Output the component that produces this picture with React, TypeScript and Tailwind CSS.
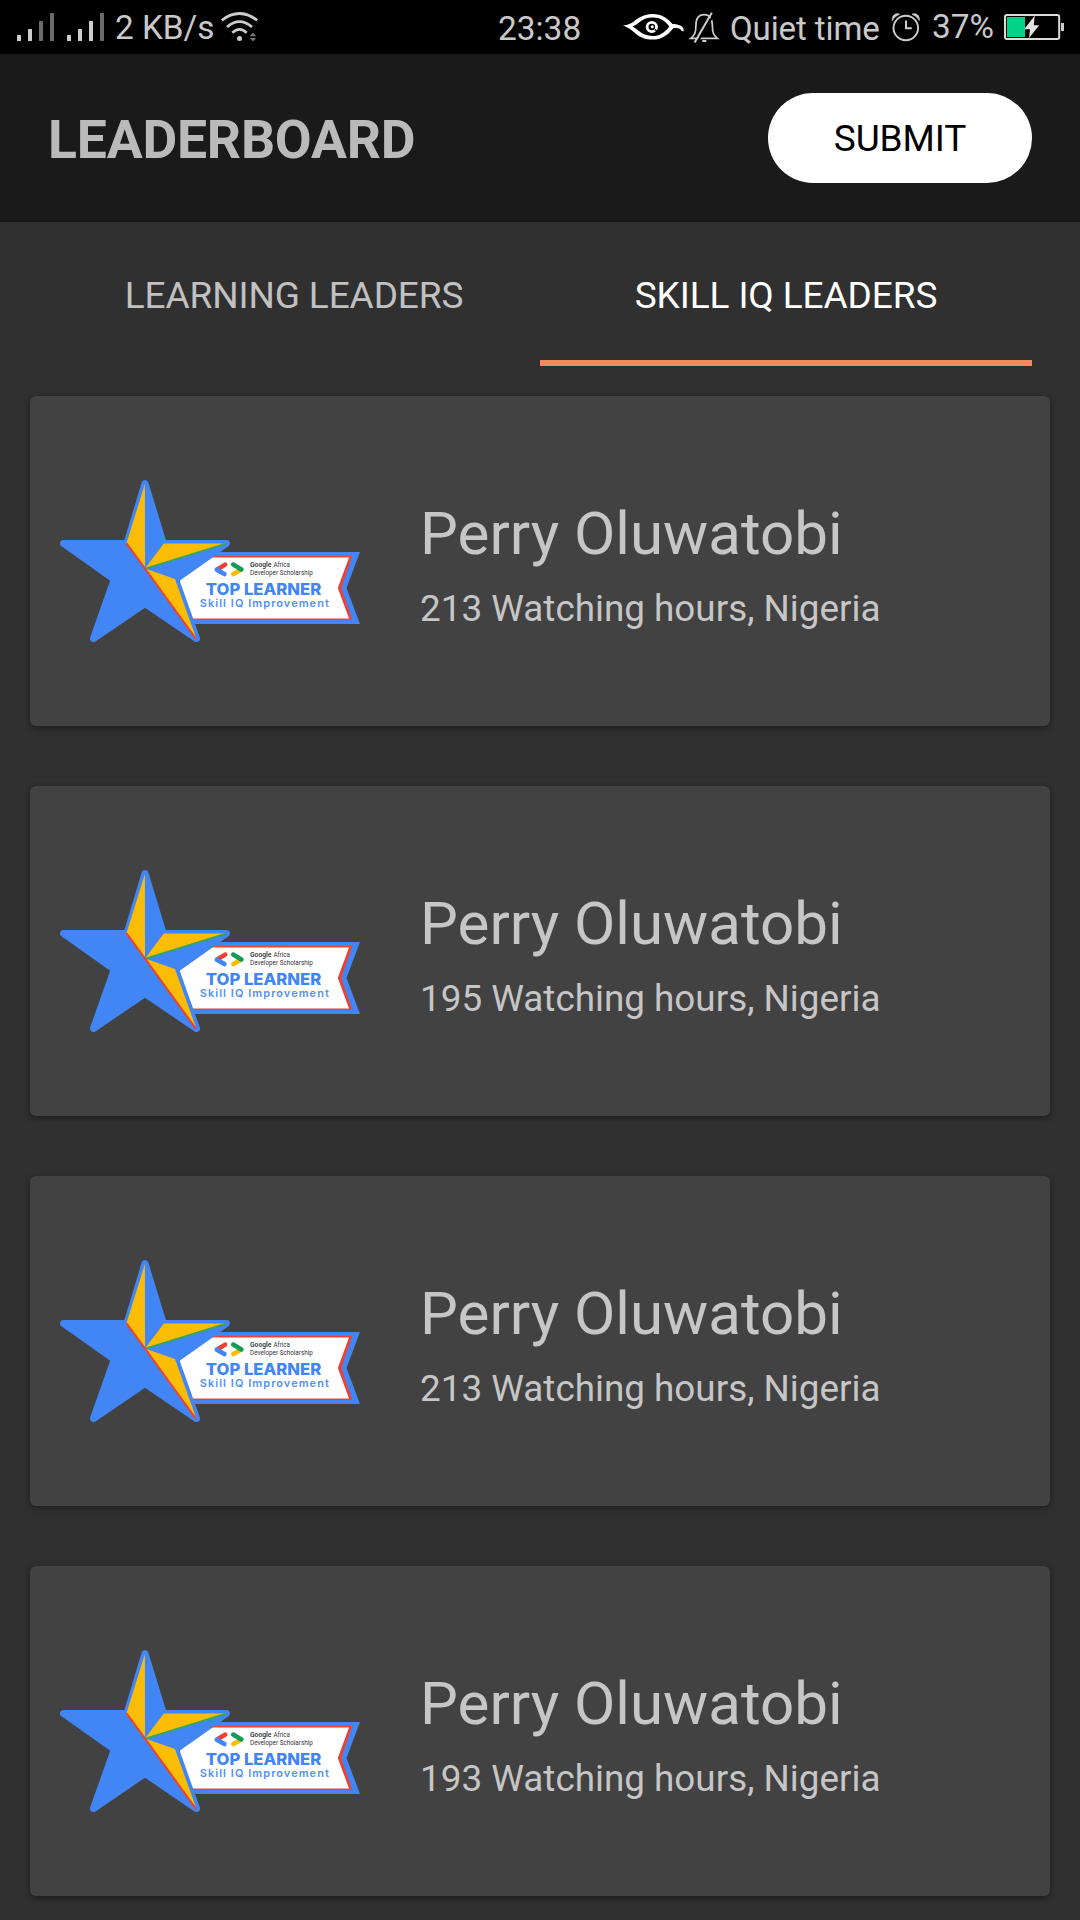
import React from "react";

const leaders = [
  { name: "Perry Oluwatobi", hours: 213, country: "Nigeria" },
  { name: "Perry Oluwatobi", hours: 195, country: "Nigeria" },
  { name: "Perry Oluwatobi", hours: 213, country: "Nigeria" },
  { name: "Perry Oluwatobi", hours: 193, country: "Nigeria" },
];

function SignalIcons() {
  return (
    <svg className="h-[54px] w-[115px] shrink-0" viewBox="0 0 115 54" fill="#cdcdcd">
      {[17, 67].map((x, i) => (
        <g key={x}>
          <rect x={x} y="35" width="4" height="6" rx="0.5" />
          <rect x={x + 11} y="29" width="4" height="12" rx="0.5" />
          <rect x={x + 22} y="21" width="4" height="20" rx="0.5" fill={i === 0 ? "#6b6b6b" : "#cdcdcd"} />
          <rect x={x + 33} y="13" width="4" height="28" rx="0.5" fill="#6b6b6b" />
        </g>
      ))}
    </svg>
  );
}

function WifiIcon() {
  return (
    <svg className="h-[54px] w-[60px] shrink-0" viewBox="215 0 60 54" fill="none" stroke="#cdcdcd" strokeWidth="2.8">
      <path d="M221.8 20.3Q239.5 6.8 257.2 20.3" />
      <path d="M227 27Q239.5 16.2 252 27" />
      <path d="M232.3 32.8Q239.5 26 246.7 32.8" />
      <circle cx="239.5" cy="38.5" r="2.5" fill="#cdcdcd" stroke="none" />
      <path d="M249.8 36.2L253 32.6L256.2 36.2ZM249.8 38L253 41.4L256.2 38Z" fill="#777" stroke="none" />
    </svg>
  );
}

function EyeAndBellIcons() {
  return (
    <svg className="h-[54px] w-[110px] shrink-0" viewBox="615 0 110 54" fill="none">
      <path
        fill="#fff"
        fillRule="evenodd"
        d="M622.8 25.3C627 25.6 630.5 24.2 635 20.6C640 16.4 646 14 653 14C661 14 667.5 18 672.5 24C678.5 24.1 684.8 26 683.6 31.4L681.2 30.6C681.2 28.2 677 28 673.5 27.9C668 35.2 661 39.6 652.5 39.6C645 39.6 639.5 36.8 635.5 33.4C631.5 29.9 628 27.4 622.8 25.3ZM632.5 26.4C634.8 27.6 636.5 29 638.7 30.8C642.4 34 646.8 36 652.5 36C659.2 36 665 32.4 669.2 26.4C665 20.8 659.6 17.6 653 17.6C647 17.6 642.6 19.5 638.7 22.8C636.4 24.7 634.5 25.8 632.5 26.4Z"
      />
      <circle cx="651.8" cy="27" r="4.7" stroke="#fff" strokeWidth="2.8" />
      <circle cx="652.3" cy="26.8" r="1.5" fill="#fff" />
      <path d="M655 29.5L658 32.5" stroke="#000" strokeWidth="1.5" />
      <g stroke="#cdcdcd" strokeWidth="1.7">
        <path d="M690.8 38.3H717.4C713.2 35 712.4 32.5 712.4 25.5C712.4 18.5 709.3 14.7 704.2 14.7C699 14.7 695.9 18.5 695.9 25.5C695.9 32.5 695 35 690.8 38.3Z" />
        <path d="M702.3 41H706.3" strokeWidth="2" />
        <path d="M697.4 42L713.5 15" stroke="#000" strokeWidth="2" />
        <path d="M694.6 42.6L711.8 12.8" strokeWidth="2" />
      </g>
    </svg>
  );
}

function AlarmIcon() {
  return (
    <svg className="h-[54px] w-[40px] shrink-0" viewBox="885 0 40 54" fill="none" stroke="#cdcdcd">
      <circle cx="905.8" cy="28" r="12.3" strokeWidth="1.9" />
      <path d="M906 20.5V28.3H911.8" strokeWidth="2" />
      <path d="M892.3 20.5C891.8 15.5 895.3 12.8 899.5 14.2C896.3 15.5 894 17.6 892.3 20.5ZM919.3 20.5C919.8 15.5 916.3 12.8 912.1 14.2C915.3 15.5 917.6 17.6 919.3 20.5Z" fill="#cdcdcd" strokeWidth="0.8" />
    </svg>
  );
}

function BatteryIcon() {
  return (
    <svg className="h-[54px] w-[70px] shrink-0" viewBox="1000 0 70 54">
      <rect x="1005" y="15" width="54.2" height="24" rx="2" fill="none" stroke="#dcdcdc" strokeWidth="2" />
      <rect x="1007" y="17" width="18" height="20" fill="#00d389" />
      <rect x="1061" y="23" width="3" height="8" fill="#cdcdcd" />
      <path d="M1034.8 15.5L1024.2 29.3H1030L1029 38L1039.3 25.2H1033.8Z" fill="#e4e4e4" />
    </svg>
  );
}

function StatusBar() {
  return (
    <div className="flex h-[54px] items-center bg-black text-[33px] leading-[54px] whitespace-nowrap text-[#c9c9c9]">
      <SignalIcons />
      <span className="w-[100px] shrink-0 pt-px text-[33.3px]">2 KB/s</span>
      <WifiIcon />
      <span className="ml-[223px] w-[84px] shrink-0 pt-[3px] text-[33.4px]">23:38</span>
      <div className="ml-[33px] flex shrink-0"><EyeAndBellIcons /></div>
      <span className="ml-[5px] w-[155px] shrink-0 pt-[3px] tracking-[-0.1px]">Quiet time</span>
      <AlarmIcon />
      <span className="ml-[7px] w-[68px] shrink-0 text-[33.4px]">37%</span>
      <BatteryIcon />
    </div>
  );
}

function LearnerBadge() {
  return (
    <svg className="h-[164px] w-[300px] shrink-0" viewBox="60 479 300 164" role="img" aria-label="Top learner badge">
      <path d="M200 552H360L346.5 588L360 624H190Z" fill="#4285f4" />
      <path d="M200 556H352.3L341.3 588L352.3 620H190Z" fill="#ea4335" />
      <path d="M200 557.6H349L337.8 588L349 618.4H180V575Z" fill="#fff" />
      <path
        d="M145 483.5L163.3 543.5H226.5L175.5 579.5L196.5 638.5L145 603.5L93.5 638.5L114.3 579.5L63.5 543.5H127Z"
        fill="#4285f4"
        stroke="#4285f4"
        strokeWidth="7"
        strokeLinejoin="round"
      />
      <g fill="#fbbc05">
        <path d="M144.9 484L126.5 543L145 568.5Z" />
        <path d="M145 568.5L163.8 543.4H226.5Z" />
        <path d="M145 568.5L175 579L196 637.5Z" />
      </g>
      <path d="M145.5 568.6L226 543.6" stroke="#34a853" strokeWidth="1.7" />
      <path d="M126.5 543.3L145 568.5L196 639" stroke="#ea4335" strokeWidth="2.1" fill="none" />
      <g strokeWidth="4.6" strokeLinecap="round">
        <path d="M218 569L225.2 564.6" stroke="#ea4335" />
        <path d="M216.8 569.7L224.4 574" stroke="#4285f4" />
        <path d="M233.4 574L241 569.7" stroke="#fbbc05" />
        <path d="M233.2 564.6L241.4 569.4" stroke="#0f9d58" />
      </g>
      <g className="font-['Roboto']" fill="#33363a" fontSize="6.9">
        <text x="250" y="566.9" textLength="21.5" lengthAdjust="spacingAndGlyphs" fontWeight="600">Google</text>
        <text x="273.5" y="566.9" textLength="16.5" lengthAdjust="spacingAndGlyphs">Africa</text>
        <text x="250" y="575.1" textLength="62.8" lengthAdjust="spacingAndGlyphs">Developer Scholarship</text>
      </g>
      <text className="font-['Inter']" x="205.8" y="595" textLength="115.4" lengthAdjust="spacingAndGlyphs" fontSize="15.8" fontWeight="800" fill="#4285f4">TOP LEARNER</text>
      <text className="font-['Inter']" x="199.8" y="606.8" textLength="129" fontSize="11" fontWeight="600" fill="#5490f5">Skill IQ Improvement</text>
    </svg>
  );
}

function LeaderCard({ name, hours, country }: { name: string; hours: number; country: string }) {
  return (
    <li className="flex h-[330px] items-center gap-[60px] rounded-[6px] bg-[#424242] px-[30px] shadow-[0_3px_6px_rgba(0,0,0,0.28),0_0_5px_rgba(0,0,0,0.15)]">
      <LearnerBadge />
      <div className="flex flex-col gap-[18px] pt-2 whitespace-nowrap text-[#c6c6c6]">
        <h2 className="text-[60.1px] leading-[70px]">{name}</h2>
        <p className="text-[36.85px] leading-[44px]">{hours} Watching hours, {country}</p>
      </div>
    </li>
  );
}

export default function App() {
  return (
    <div className="h-[1920px] w-[1080px] overflow-hidden bg-[#303030] font-['Roboto',sans-serif]">
      <StatusBar />
      <header className="flex h-[168px] items-center justify-between bg-[#1a1a1a] px-12">
        <h1 className="pt-1 text-[53.5px] leading-[64px] font-bold tracking-[-0.2px] text-[#bababa]">LEADERBOARD</h1>
        <button className="h-[90px] w-[264px] rounded-full bg-white pt-px text-[37px] tracking-[-0.1px] text-black">SUBMIT</button>
      </header>
      <nav className="grid h-36 grid-cols-2 px-12 text-[37px] tracking-[-0.1px]">
        <button className="pt-[3px] text-[#c1c1c1]">LEARNING LEADERS</button>
        <button className="border-b-[6px] border-[#f48765] pt-[9px] text-white">SKILL IQ LEADERS</button>
      </nav>
      <ul className="flex flex-col gap-[60px] px-[30px] pt-[30px]">
        {leaders.map((leader, i) => (
          <LeaderCard key={i} {...leader} />
        ))}
      </ul>
    </div>
  );
}
